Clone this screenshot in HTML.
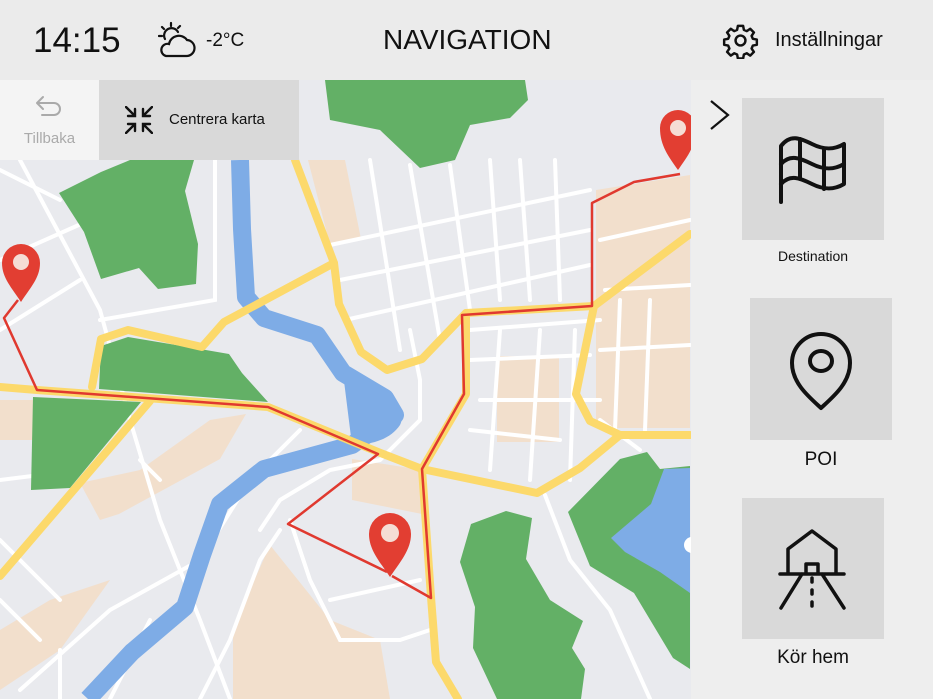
<!DOCTYPE html>
<html><head><meta charset="utf-8"><style>
*{margin:0;padding:0;box-sizing:border-box}
body{width:933px;height:699px;overflow:hidden;background:#e9eaee;font-family:"Liberation Sans",sans-serif;position:relative}
.hdr{position:absolute;left:0;top:0;width:933px;height:80px;background:#ebebeb}
.abs{position:absolute}
.panel{position:absolute;left:691px;top:80px;width:242px;height:619px;background:#eeeeee}
.tile{position:absolute;background:#d9d9d9}
.lbl{position:absolute;text-align:center;color:#111}
</style></head><body>
<svg class="abs" style="left:0;top:0" width="691" height="699" viewBox="0 0 691 699">
<rect x="0" y="80" width="691" height="619" fill="#e9eaee"/>
<g fill="#f2dfcc">
<polygon points="308,160 345,160 361,239 330,245"/>
<polygon points="596,190 690,175 690,428 596,428"/>
<polygon points="497,356 559,356 559,442 497,442"/>
<polygon points="0,400 33,400 33,440 0,440"/>
<polygon points="119,514 220,459 246,414 210,420 140,470 80,483 100,520"/>
<polygon points="233,628 270,545 330,620 380,640 390,699 233,699"/>
<polygon points="352,459 422,470 422,514 352,500"/>
<polygon points="0,630 50,600 110,580 60,650 0,690"/>
</g>
<g stroke="#fff" stroke-width="4" fill="none" stroke-linecap="round">
<path d="M0,170 L60,200 M20,160 L100,310 L130,420 L160,520 L200,620 L230,699"/>
<path d="M0,260 L90,220 M0,330 L80,280 M100,320 L215,300 L215,160"/>
<path d="M0,480 L80,470 M0,540 L60,600 M20,690 L110,610 L200,560 L250,480 L300,430"/>
<path d="M330,245 L590,190 M340,280 L590,230 M345,320 L590,265 M370,160 L400,350 M410,165 L440,340 M450,165 L470,310 M490,160 L500,300 M520,160 L530,300 M555,160 L560,300"/>
<path d="M470,330 L600,320 M470,360 L590,355 M480,400 L600,400 M470,430 L560,440 M500,330 L490,470 M540,330 L530,480 M575,330 L570,480"/>
<path d="M600,240 L690,220 M605,290 L690,285 M600,350 L690,345 M620,300 L615,430 M650,300 L645,430"/>
<path d="M290,520 L310,580 L340,640 L400,640 L430,630 M280,530 L260,560 L230,640 L200,699 M330,600 L420,580"/>
<path d="M410,330 L420,380 L420,420 L380,460 L330,470 L280,500 L260,530"/>
<path d="M545,495 L570,560 L610,610 L650,699 M600,420 L640,450"/>
<path d="M0,600 L40,640 M60,650 L60,699 M140,460 L160,480 M150,620 L110,699"/>
</g>
<g fill="#63b066">
<polygon points="59,193 101,172 130,160 194,160 185,191 198,244 196,284 158,289 139,268 101,279 84,232"/>
<polygon points="325,80 525,80 528,100 510,118 470,125 455,160 420,168 380,130 330,120"/>
<polygon points="101,346 128,337 200,349 229,354 242,373 268,402 99,389"/>
<polygon points="33,397 141,402 70,488 31,490"/>
<polygon points="471,524 506,511 532,518 526,559 550,600 583,621 572,648 585,669 581,699 497,699 473,648 475,607 460,562"/>
<polygon points="568,512 620,459 647,452 660,469 690,466 690,669 673,658 634,593 590,566"/>
</g>
<polygon fill="#7eace6" points="611,538 651,504 664,469 690,468 690,593 660,572 625,552"/>
<circle cx="692" cy="545" r="8" fill="#fff"/>
<path d="M240,160 L242,229 L246,297 L264,318 L317,335 L343,373 L385,398 L395,415 L352,445 L264,469 L220,504 L202,555 L185,607 L132,652 L88,699" stroke="#7eace6" stroke-width="18" fill="none" stroke-linejoin="round"/>
<path d="M343,373 C380,380 410,405 400,425 C390,440 370,445 352,445 Z" fill="#7eace6"/>
<g stroke="#fcd96b" stroke-width="8" fill="none" stroke-linejoin="round" stroke-linecap="round">
<path d="M0,387 L37,390 L268,407 L378,452 L422,469 L537,493 L580,468 L620,435 L690,435"/>
<path d="M150,401 L0,576"/>
<path d="M92,387 L101,339 L128,330 L202,347 L224,322 L334,263 L295,160"/>
<path d="M334,263 L339,304 L361,352 L387,370 L422,359 L466,313 L594,306 L690,234"/>
<path d="M594,306 L576,394 L590,421 L620,435"/>
<path d="M466,313 L466,394 L422,469 L431,597 L436,662 L458,699"/>
</g>
<path d="M18,300 L4,318 L37,390 L268,407 L378,454 L288,524 L387,572 M392,576 L431,598 L422,469 L464,394 L462,315 L592,306 L592,203 L634,182 L680,174" stroke="#e0392f" stroke-width="2.5" fill="none" stroke-linejoin="round"/>
<g>
<path d="M21,302 C12,288 2,278 2,263 A19,19 0 0 1 40,263 C40,278 30,288 21,302Z" fill="#e23e32"/><circle cx="21" cy="262" r="8" fill="#f5ddd5"/>
<path d="M390,577 C380,562 369,550 369,534 A21,21 0 0 1 411,534 C411,550 400,562 390,577Z" fill="#e23e32"/><circle cx="390" cy="533" r="9" fill="#f5ddd5"/>
<path d="M678,170 C669,157 660,146 660,128 A18,18 0 0 1 696,128 C696,146 687,157 678,170Z" fill="#e23e32"/><circle cx="678" cy="128" r="8" fill="#f5ddd5"/>
</g>
</svg>
<div class="hdr"></div>
<div class="abs" style="left:33px;top:21px;font-size:35px;color:#111">14:15</div>
<svg class="abs" style="left:158px;top:21px" width="40" height="38" viewBox="0 0 40 38" fill="none" stroke="#111" stroke-width="2.2" stroke-linecap="round">
<path d="M7,18 a7,7 0 0 1 13,-7"/><path d="M13,2 v3 M4,6 l2,2 M22,5 l-2,2 M1,15 h3"/>
<path d="M8,35 h20 a8,8 0 0 0 1,-16 a10,10 0 0 0 -18,4 a6,6 0 0 0 -3,12z" fill="#ebebeb"/>
</svg>
<div class="abs" style="left:206px;top:30px;font-size:19px;color:#111">-2°C</div>
<div class="abs" style="left:383px;top:24px;font-size:28px;color:#111">NAVIGATION</div>
<svg class="abs" style="left:722px;top:22px" width="37" height="37" viewBox="0 0 24 24" fill="none" stroke="#111" stroke-width="1.6" stroke-linejoin="round">
<circle cx="12" cy="12" r="3.2"/>
<path d="M10.3,2.5h3.4l.5,2.6 1.9,.8 2.2-1.5 2.4,2.4-1.5,2.2.8,1.9 2.6,.5v3.4l-2.6,.5-.8,1.9 1.5,2.2-2.4,2.4-2.2-1.5-1.9,.8-.5,2.6h-3.4l-.5-2.6-1.9-.8-2.2,1.5-2.4-2.4 1.5-2.2-.8-1.9-2.6-.5v-3.4l2.6-.5.8-1.9-1.5-2.2 2.4-2.4 2.2,1.5 1.9-.8z"/>
</svg>
<div class="abs" style="left:775px;top:29px;font-size:20px;color:#111">Inställningar</div>
<div class="abs" style="left:0;top:80px;width:99px;height:80px;background:#f4f4f4"></div>
<svg class="abs" style="left:34px;top:94px" width="30" height="26" viewBox="0 0 30 26" fill="none" stroke="#aaa" stroke-width="2" stroke-linecap="round" stroke-linejoin="round"><path d="M9,3 L3,9 L9,15 M3,9 H20 a6,6 0 0 1 0,12 H8"/></svg>
<div class="abs" style="left:0;top:130px;width:99px;text-align:center;font-size:15px;color:#aaa">Tillbaka</div>
<div class="abs" style="left:99px;top:80px;width:200px;height:80px;background:#d9d9d9"></div>
<svg class="abs" style="left:125px;top:106px" width="28" height="28" viewBox="0 0 28 28" fill="none" stroke="#111" stroke-width="2.4" stroke-linecap="round"><path d="M1,1 L10,10 M10,3 V10 H3 M27,1 L18,10 M18,3 V10 H25 M1,27 L10,18 M10,25 V18 H3 M27,27 L18,18 M18,25 V18 H25"/></svg>
<div class="abs" style="left:169px;top:111px;font-size:15px;color:#111">Centrera karta</div>
<div class="panel"></div>
<svg class="abs" style="left:708px;top:98px" width="24" height="34" viewBox="0 0 24 34" fill="none" stroke="#111" stroke-width="2.2"><path d="M3,3 L20,17 L3,31"/></svg>
<div class="tile" style="left:742px;top:98px;width:142px;height:142px"></div>
<svg class="abs" style="left:778px;top:124px" width="70" height="80" viewBox="0 0 70 80" fill="none" stroke="#111" stroke-width="4" stroke-linecap="round" stroke-linejoin="round">
<path d="M3,78 V22 C12,10 22,14 34,20 C46,26 56,26 66,20 V60 C56,66 46,66 34,60 C22,54 12,50 3,60"/>
<path d="M3,40 C12,30 22,34 34,40 C46,46 56,46 66,40 M22,15 V55 M46,25 V65"/>
</svg>
<div class="lbl" style="left:742px;top:248px;width:142px;font-size:14px">Destination</div>
<div class="tile" style="left:750px;top:298px;width:142px;height:142px"></div>
<svg class="abs" style="left:789px;top:331px" width="64" height="80" viewBox="0 0 64 80" fill="none" stroke="#111" stroke-width="4" stroke-linejoin="round">
<path d="M32,77 C20,66 3,52 3,32 A29,29 0 0 1 61,32 C61,52 44,66 32,77Z"/><ellipse cx="32" cy="30" rx="11" ry="10"/>
</svg>
<div class="lbl" style="left:750px;top:449px;width:142px;font-size:19px">POI</div>
<div class="tile" style="left:742px;top:498px;width:142px;height:141px"></div>
<svg class="abs" style="left:778px;top:528px" width="70" height="88" viewBox="0 0 70 88" fill="none" stroke="#111" stroke-width="3.5" stroke-linecap="round" stroke-linejoin="round">
<path d="M10,46 V21 L34,3 L58,21 V46 M2,46 H66 M28,46 V36 H40 V46 M24,46 L3,80 M44,46 L66,80 M34,50 V54 M34,62 V66 M34,74 V78"/>
</svg>
<div class="lbl" style="left:742px;top:647px;width:142px;font-size:19px">Kör hem</div>
</body></html>
